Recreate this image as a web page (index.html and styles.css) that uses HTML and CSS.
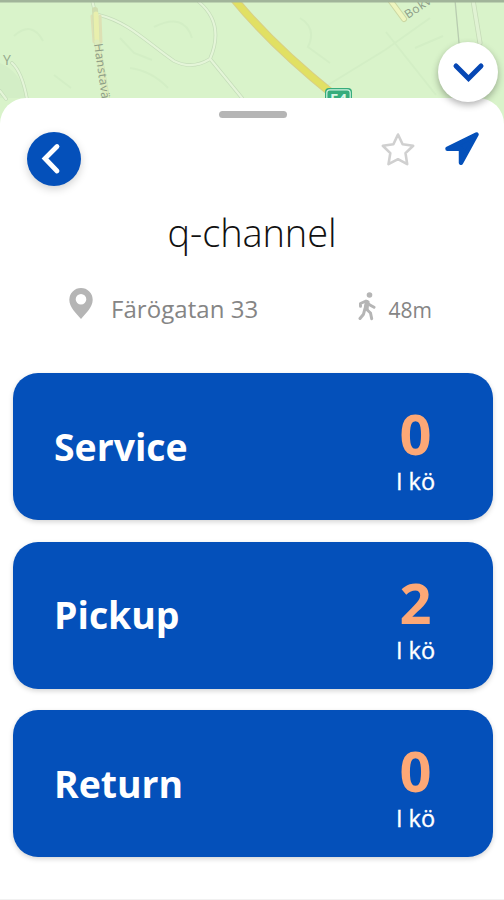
FILE: index.html
```html
<!DOCTYPE html>
<html lang="sv">
<head>
<meta charset="utf-8">
<title>q-channel</title>
<link rel="stylesheet" href="styles.css">
</head>
<body>
<main class="app">
  <svg class="map" width="504" height="132" viewBox="0 0 504 132" aria-hidden="true">
    <rect width="504" height="132" fill="#d9f3ca"/>
    <g fill="none" stroke="#d3eec5" stroke-width="2">
      <path d="M14 36q18-16 29 5M120 38l14 15 18 7M154 27q30-15 38 11M54 75l17 13M130 68q22 3 38 20M300 18q17 10 8 29l22 16M430 18l-45 32-57 35M386 32l50 63M443 36l-28 12"/>
    </g>
    <path d="M0 63q21 9 27 35H0z" fill="#d3eec6"/>
    <g fill="none" stroke-linecap="round" stroke-linejoin="round">
      <path d="M92 0l4 16M99 15c30 7 51 30 75 46q18 9 36-2Q225 24 199 2M211 60l31 38M12 63q10 9 15 36M0 91l6 8" stroke="#c4dcb9" stroke-width="3.600"/>
      <path d="M92 0l4 16M99 15c30 7 51 30 75 46q18 9 36-2Q225 24 199 2M211 60l31 38M12 63q10 9 15 36M0 91l6 8" stroke="#e4f5d8" stroke-width="2.200"/>
      <path d="M92 16l2 26M100 16l1 26" stroke="#dde0b4" stroke-width="3"/>
      <path d="M95 10l2 32 10 57" stroke="#d0deb0" stroke-width="6"/>
      <path d="M96 14l1 28" stroke="#e8efad" stroke-width="5"/>
      <path d="M97 42l10 57" stroke="#ddecbd" stroke-width="5"/>
      <path d="M390 0l14 19" stroke="#cbd7a3" stroke-width="6"/>
      <path d="M390 0l14 19" stroke="#eef5bf" stroke-width="4"/>
      <path d="M455 0l4 43" stroke="#b8ccb0" stroke-width="1.300"/>
      <path d="M473 0l7 43" stroke="#c5dab7" stroke-width="5"/>
      <path d="M473 0l7 43" stroke="#e0f2d3" stroke-width="3.500"/>
      <path d="M230-6Q270 44 335 96" stroke="#d8cf86" stroke-width="8.500"/>
      <path d="M230-6Q270 44 335 96" stroke="#e1e063" stroke-width="6.500"/>
    </g>
    <text class="road" transform="translate(94 44) rotate(82)">Hanstavägen</text>
    <text class="road" transform="translate(408 19) rotate(-34)">Bokvä</text>
    <text class="place" x="3" y="65">Y</text>
    <rect x="325" y="88" width="27" height="20" rx="4" fill="#36ac7c"/>
    <rect x="326.800" y="89.800" width="23.400" height="17" rx="3" fill="#36ac7c" stroke="#d4f2df" stroke-width="1.200"/>
    <text class="shield" x="338.500" y="104" text-anchor="middle">E4</text>
    <rect width="504" height="2.500" fill="#a1b49a"/>
  </svg>
  <button class="collapse" aria-label="Minimera">
    <svg width="60" height="60" viewBox="0 0 60 60"><path d="M18 24l12.500 12.500L43 24" fill="none" stroke="#0647b4" stroke-width="5" stroke-linecap="round"/></svg>
  </button>
  <section class="sheet">
    <div class="handle"></div>
    <div class="toolbar">
      <button class="back" aria-label="Tillbaka">
        <svg width="54" height="54" viewBox="0 0 54 54"><path d="M30 14.500L18 26.500l12 12.500" fill="none" stroke="#fff" stroke-width="4.800" stroke-linecap="round"/></svg>
      </button>
      <div class="actions">
        <svg width="36" height="36" viewBox="0 0 36 36"><path d="M18 2.500l4.600 9.800 10.600 1.500-7.700 7.300 1.700 11L18 27.200l-9.500 4.900 1.800-11-7.500-7.300 10.600-1.500z" fill="none" stroke="#d0d0d0" stroke-width="2.600" stroke-linejoin="round"/></svg>
        <svg width="36" height="36" viewBox="0 0 36 36"><path d="M32.500 2.500L17 30.700V16.700H3.500z" fill="#0450ba" stroke="#0450ba" stroke-width="4.500" stroke-linejoin="round"/></svg>
      </div>
    </div>
    <h1 class="title">q-channel</h1>
    <div class="meta">
      <div class="address">
        <svg width="24" height="32" viewBox="0 0 24 32"><path fill="#b5b5b5" fill-rule="evenodd" d="M12 0A11.700 11.700 0 0 0 .3 11.700C.3 19 7 25 12 31c5-6 11.700-12 11.700-19.300A11.700 11.700 0 0 0 12 0zm0 6a5.300 5.300 0 1 1 0 10.600 5.300 5.300 0 0 1 0-10.600z"/></svg>
        <span class="street">Färögatan 33</span>
      </div>
      <div class="distance">
        <svg width="19" height="29" viewBox="0 0 19 29"><circle cx="11.500" cy="3" r="2.800" fill="#b5b5b5"/><path d="M2.500 14.300V11.500L8 9l3.500 3.700 4.500 2.500M9.300 9.500l-1.600 7 4.800 4.500 1.200 5.700M6.700 17.700L5.500 22.200 2 26.500" fill="none" stroke="#b5b5b5" stroke-width="3" stroke-linecap="round" stroke-linejoin="round"/><path d="M7 8.500l4.500.5-1 9-5-1z" fill="#b5b5b5"/></svg>
        <span class="meters">48m</span>
      </div>
    </div>
    <div class="queues">
      <article class="card"><h2 class="name">Service</h2><div class="queue"><span class="count">0</span><span class="label">I kö</span></div></article>
      <article class="card"><h2 class="name">Pickup</h2><div class="queue"><span class="count">2</span><span class="label">I kö</span></div></article>
      <article class="card"><h2 class="name">Return</h2><div class="queue"><span class="count">0</span><span class="label">I kö</span></div></article>
    </div>
  </section>
</main>
</body>
</html>
```
FILE: styles.css
```css
* { box-sizing: border-box; }
body { margin: 0; background: #fff; font-family: "Open Sans", sans-serif; }
button { border: 0; padding: 0; border-radius: 50%; }
svg { display: block; flex: none; }
.app { position: relative; height: 900px; overflow: hidden; }
.road { font: 12px "Open Sans", sans-serif; letter-spacing: .5px; fill: #8c9c86; }
.place { font: 14px "Open Sans", sans-serif; fill: #94a78c; }
.shield { font: bold 15px "Open Sans", sans-serif; fill: #d9f5e5; }
.collapse {
  position: absolute; z-index: 2; top: 42px; left: 438px;
  width: 60px; height: 60px; background: #fff;
  box-shadow: 0 3px 7px rgba(0, 0, 0, .3);
}
.sheet {
  position: relative; height: 802px; margin-top: -34px; padding-top: 13px;
  background: #fff; border-radius: 26px 26px 0 0; border-bottom: 1px solid #f1f1f1;
}
.handle { width: 68px; height: 7px; margin: 0 auto; border-radius: 4px; background: #b5b5b5; transform: translateX(1px); }
.toolbar { display: flex; justify-content: space-between; height: 54px; margin-top: 14px; padding: 0 24px 0 27px; }
.back { width: 54px; height: 54px; background: #0450ba; box-shadow: 0 3px 8px rgba(0, 0, 0, .18); }
.actions { display: flex; gap: 28px; }
.title { margin: 17px 0 0; text-align: center; font-size: 38px; font-weight: 300; line-height: 58px; letter-spacing: -.1px; color: #111; }
.meta { display: flex; justify-content: space-between; height: 36px; margin-top: 27px; padding: 0 72px 0 69px; color: #858585; }
.address, .distance { display: flex; align-items: flex-start; }
.address { gap: 18px; }
.street { font-size: 24px; line-height: 42px; letter-spacing: .05px; white-space: nowrap; }
.distance { gap: 12px; padding-top: 4px; }
.meters { font-size: 21px; line-height: 36px; }
.queues { display: grid; gap: 21.500px; margin: 49px 11.500px 0 13px; }
.card {
  display: flex; align-items: center; justify-content: space-between;
  height: 147px; padding: 0 47px 0 41px; border-radius: 25px;
  background: #0450ba; box-shadow: 0 2px 5px rgba(0, 0, 0, .17); color: #fff;
}
.name { margin: 0; font-size: 37.400px; font-weight: 700; line-height: 50px; }
.queue { display: flex; flex-direction: column; align-items: center; width: 60px; padding-top: 7px; }
.count { font-size: 56px; font-weight: 700; line-height: 62px; color: #fda876; }
.label { font-size: 23.500px; font-weight: 500; line-height: 34px; -webkit-text-stroke: .35px #fff; }
```
